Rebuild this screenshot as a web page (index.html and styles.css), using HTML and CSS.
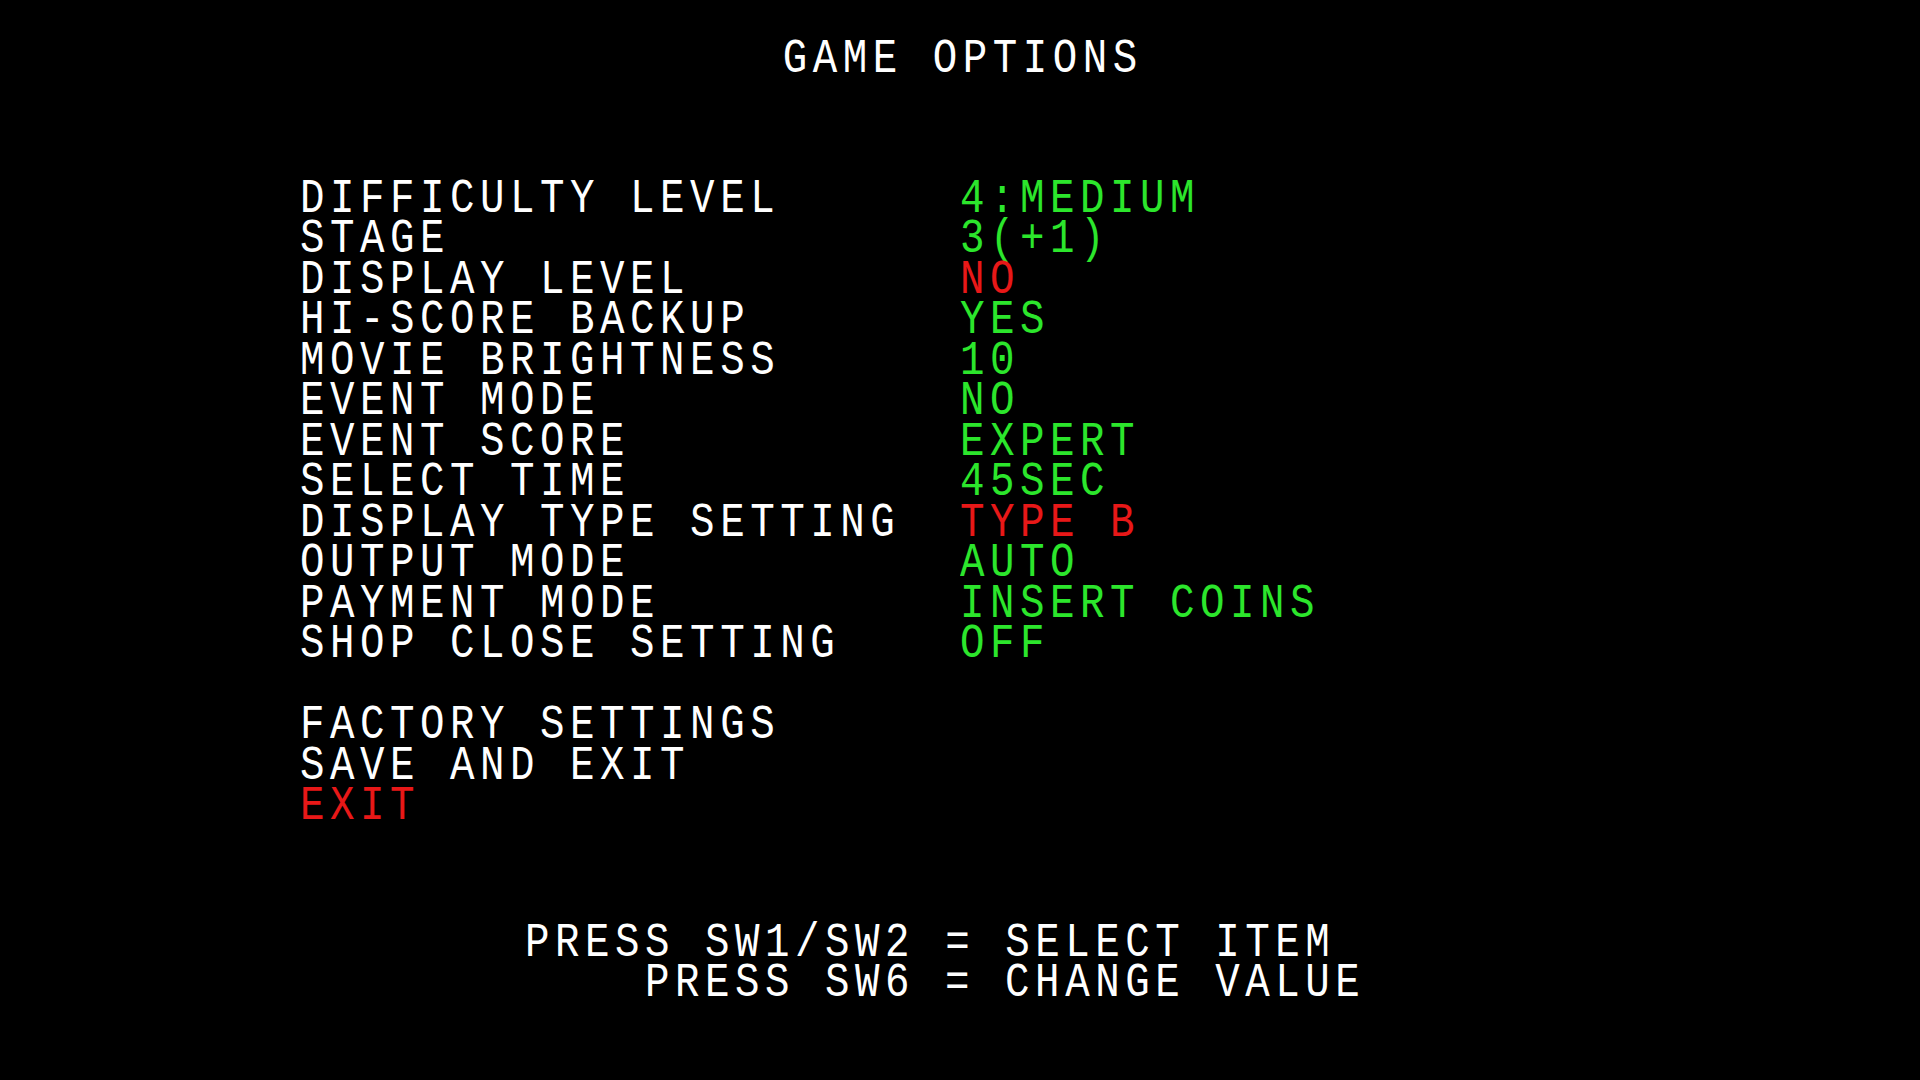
FILE: index.html
```html
<!DOCTYPE html>
<html lang="en">
<head>
<meta charset="utf-8">
<title>GAME OPTIONS</title>
<link rel="stylesheet" href="styles.css">
</head>
<body>
<main class="screen">
  <h1 class="title"><span class="t t-center">GAME OPTIONS</span></h1>
  <section class="menu">
    <div class="row"><span class="t label">DIFFICULTY LEVEL</span><span class="t value green">4:MEDIUM</span></div>
    <div class="row"><span class="t label">STAGE</span><span class="t value green">3(+1)</span></div>
    <div class="row"><span class="t label">DISPLAY LEVEL</span><span class="t value red">NO</span></div>
    <div class="row"><span class="t label">HI-SCORE BACKUP</span><span class="t value green">YES</span></div>
    <div class="row"><span class="t label">MOVIE BRIGHTNESS</span><span class="t value green">10</span></div>
    <div class="row"><span class="t label">EVENT MODE</span><span class="t value green">NO</span></div>
    <div class="row"><span class="t label">EVENT SCORE</span><span class="t value green">EXPERT</span></div>
    <div class="row"><span class="t label">SELECT TIME</span><span class="t value green">45SEC</span></div>
    <div class="row"><span class="t label">DISPLAY TYPE SETTING</span><span class="t value red">TYPE B</span></div>
    <div class="row"><span class="t label">OUTPUT MODE</span><span class="t value green">AUTO</span></div>
    <div class="row"><span class="t label">PAYMENT MODE</span><span class="t value green">INSERT COINS</span></div>
    <div class="row"><span class="t label">SHOP CLOSE SETTING</span><span class="t value green">OFF</span></div>
    <div class="row spacer"></div>
    <div class="row"><span class="t label">FACTORY SETTINGS</span></div>
    <div class="row"><span class="t label">SAVE AND EXIT</span></div>
    <div class="row"><span class="t label red">EXIT</span></div>
  </section>
  <footer class="help">
    <div class="help-line"><span class="t">PRESS SW1/SW2 = SELECT ITEM</span></div>
    <div class="help-line indent"><span class="t">PRESS SW6 = CHANGE VALUE</span></div>
  </footer>
</main>
</body>
</html>
```

FILE: styles.css
```css
html, body {
  margin: 0;
  padding: 0;
  background: #000;
}

body {
  width: 1920px;
  height: 1080px;
  overflow: hidden;
  font-family: "Liberation Mono", "DejaVu Sans Mono", monospace;
  font-size: 48px;
  line-height: 40.5px;
  color: #ffffff;
}

.screen {
  display: flex;
  flex-direction: column;
  padding-top: 39px;
}

/* narrow bitmap-style glyphs on a 30px character grid */
.t {
  display: inline-block;
  white-space: pre;
  letter-spacing: 6.5px;
  transform: scaleX(0.85);
  transform-origin: 0 0;
}

.t-center {
  transform-origin: 50% 0;
  margin-left: 6px;
}

.title {
  margin: 0;
  font-size: inherit;
  font-weight: normal;
  line-height: inherit;
  text-align: center;
}

.menu {
  display: flex;
  flex-direction: column;
  margin-top: 99px;
  padding-left: 300px;
}

.row {
  display: grid;
  grid-template-columns: 660px auto;
  height: 40.5px;
}

.label,
.value {
  justify-self: start;
}

.green {
  color: #2ce62c;
}

.red {
  color: #e81818;
}

.help {
  margin-top: 96px;
  padding-left: 525px;
}

.help-line {
  height: 40.5px;
}

.help-line.indent {
  padding-left: 120px;
}
```
